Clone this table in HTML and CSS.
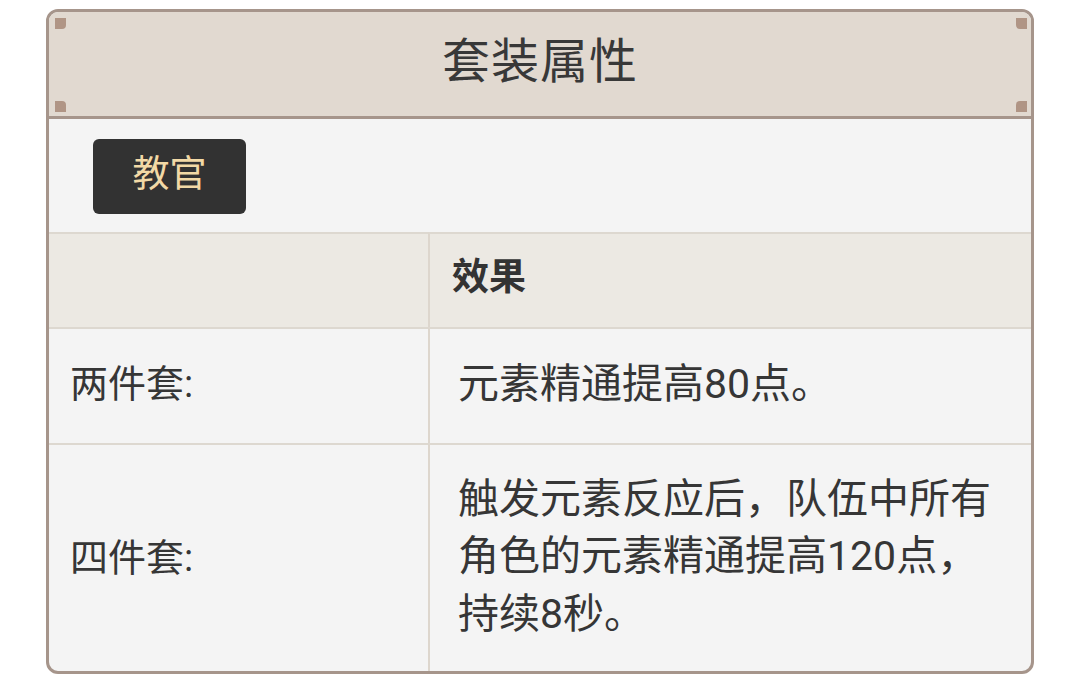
FILE: index.html
```html
<!DOCTYPE html>
<html lang="zh">
<head>
<meta charset="utf-8">
<link rel="stylesheet" href="styles.css">
</head>
<body>
<div class="card">
  <div class="head">
    <span class="dot tl"></span><span class="dot tr"></span>
    <span class="dot bl"></span><span class="dot br"></span>
    <h1 class="title">套装属性</h1>
  </div>
  <div class="tagbar"><span class="tag">教官</span></div>
  <div class="table">
    <div class="cell th first"></div>
    <div class="cell th second"><b>效果</b></div>
    <div class="cell r2 first">两件套:</div>
    <div class="cell r2 second">元素精通提高80点。</div>
    <div class="cell r3 first">四件套:</div>
    <div class="cell r3 second">触发元素反应后，队伍中所有<br>角色的元素精通提高120点，<br>持续8秒。</div>
  </div>
</div>
</body>
</html>
```
FILE: styles.css
```css
html, body { margin: 0; padding: 0; background: #ffffff; }
body {
  font-family: "Roboto", "Noto Sans CJK SC", sans-serif;
  color: #363636;
  padding-top: 9px;
  padding-left: 46px;
}
.card {
  width: 982px;
  height: 659px;
  border: 3px solid #a6958b;
  border-radius: 12px;
  overflow: hidden;
  background: #f4f4f4;
  display: flex;
  flex-direction: column;
}
.head {
  position: relative;
  height: 104px;
  background: #e1d9d0;
  border-bottom: 3px solid #a6958b;
  display: flex;
  align-items: center;
  justify-content: center;
  flex: none;
}
.title {
  margin: 0;
  font-weight: 400;
  font-size: 48px;
  line-height: 1;
  color: #383838;
  letter-spacing: 1px;
  margin-top: -4px;
}
.dot {
  position: absolute;
  width: 11px;
  height: 11px;
  background: #b09585;
}
.dot.tl { left: 6px; top: 6px; border-bottom-right-radius: 4px; }
.dot.tr { right: 4px; top: 6px; border-bottom-left-radius: 4px; }
.dot.bl { left: 6px; bottom: 4px; border-top-right-radius: 4px; }
.dot.br { right: 4px; bottom: 4px; border-top-left-radius: 4px; }
.tagbar {
  height: 113px;
  display: flex;
  align-items: center;
  padding-left: 44px;
  flex: none;
}
.tag {
  width: 153px;
  height: 75px;
  background: #323232;
  border-radius: 6px;
  color: #f2d9a6;
  font-size: 37px;
  display: flex;
  align-items: center;
  justify-content: center;
  margin-top: 2px;
  padding-bottom: 12px;
  box-sizing: border-box;
}
.table {
  flex: 1;
  display: grid;
  grid-template-columns: 379px 1fr;
  grid-template-rows: 95px 116px 1fr;
}
.cell {
  border-top: 2px solid #ddd8d0;
  display: flex;
  align-items: center;
  font-size: 38px;
  line-height: 57.5px;
  box-sizing: border-box;
  padding-bottom: 2px;
}
.cell.first { padding-left: 21px; }
.cell.second { border-left: 2px solid #ddd6cd; padding-left: 28px; font-size: 41px; }
.cell.th { background: #ece9e3; }
.cell.th.second { padding-left: 22px; font-size: 37px; color: #333; padding-bottom: 6px; }
.cell.th b { font-weight: 700; }
.cell.r3.first { padding-bottom: 0; padding-top: 2px; }
.cell.r3.second { padding-bottom: 2px; }
```
